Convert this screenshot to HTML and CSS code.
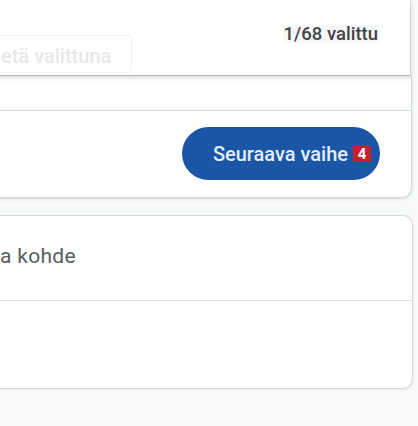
FILE: index.html
```html
<!DOCTYPE html>
<html lang="fi">
<head>
<meta charset="utf-8">
<title>Valinta</title>
<link rel="stylesheet" href="styles.css">
</head>
<body>
<div class="page">
  <div class="selection-bar">
    <div class="ghost-box"><span class="ghost-text">etä valittuna</span></div>
    <div class="count">1/68 valittu</div>
  </div>
  <div class="card card-top">
    <div class="card-upper"></div>
    <div class="card-footer">
      <button class="next-btn" type="button">
        <span class="next-label">Seuraava vaihe</span>
        <span class="badge">4</span>
      </button>
    </div>
  </div>
  <div class="card card-bottom">
    <div class="row row-title">a kohde</div>
    <div class="row row-empty"></div>
  </div>
</div>
</body>
</html>
```

FILE: styles.css
```css
html, body {
  margin: 0;
  padding: 0;
}

body {
  background: #f8f9f9;
  font-family: Roboto, "Noto Sans", "Liberation Sans", sans-serif;
  width: 418px;
  height: 426px;
  overflow: hidden;
}

.page {
  margin-left: -12px;
  width: 425px;
  display: flex;
  flex-direction: column;
}

/* top overlay panel */
.selection-bar {
  position: relative;
  z-index: 2;
  display: grid;
  height: 75px;
  margin-right: 2px;
  background: #ffffff;
  border-right: 1px solid #d6d8d8;
  border-bottom: 1px solid #b4b6b6;
  box-shadow: 0 2px 4px rgba(0, 0, 0, 0.14);
}

.count {
  grid-area: 1 / 1;
  justify-self: end;
  align-self: start;
  margin-top: 25px;
  margin-right: 31px;
  font-size: 18.5px;
  line-height: 18px;
  font-weight: 500;
  color: #424548;
  background: #f7f7f7;
  padding: 0 1px;
}

.ghost-box {
  grid-area: 1 / 1;
  justify-self: start;
  align-self: end;
  width: 144px;
  height: 38px;
  margin-bottom: 2px;
  border: 1px solid #f1f2f2;
  border-radius: 4px;
  display: flex;
  align-items: center;
  box-sizing: border-box;
  padding: 4px 0 0 12px;
}

.ghost-text {
  font-size: 20px;
  font-weight: 500;
  color: #e7e8e8;
}

/* cards */
.card {
  background: #ffffff;
  border: 1px solid #d3d8d8;
  border-left: none;
}

.card-top {
  margin-right: 1px;
  border-top: none;
  border-radius: 0 0 10px 0;
  box-shadow: 0 1px 3px rgba(0, 0, 0, 0.14);
}

.card-upper {
  height: 34px;
  border-bottom: 1px solid #d5dedd;
}

.card-footer {
  display: flex;
  justify-content: flex-end;
  padding: 16px 31px 17px 0;
}

.next-btn {
  display: flex;
  align-items: center;
  justify-content: flex-end;
  gap: 5px;
  width: 198px;
  height: 53px;
  padding: 0 9px 0 0;
  border: none;
  border-radius: 27px;
  background: #1b56a6;
  font-family: Roboto, "Noto Sans", "Liberation Sans", sans-serif;
  cursor: pointer;
}

.next-label {
  font-size: 20px;
  font-weight: 500;
  color: #e6edf7;
}

.badge {
  display: flex;
  align-items: center;
  justify-content: center;
  width: 18px;
  height: 16px;
  background: #c6212b;
  color: #ffffff;
  font-size: 15px;
  font-weight: 700;
  line-height: 16px;
}

.card-bottom {
  margin-top: 17px;
  border-radius: 0 10px 10px 0;
  box-shadow: 0 1px 3px rgba(0, 0, 0, 0.08);
}

.row-title {
  padding: 28px 0 32px 12px;
  font-size: 21px;
  line-height: 24px;
  letter-spacing: 0.3px;
  color: #5a5e62;
  border-bottom: 1px solid #dae1e1;
}

.row-empty {
  height: 87px;
}
```
